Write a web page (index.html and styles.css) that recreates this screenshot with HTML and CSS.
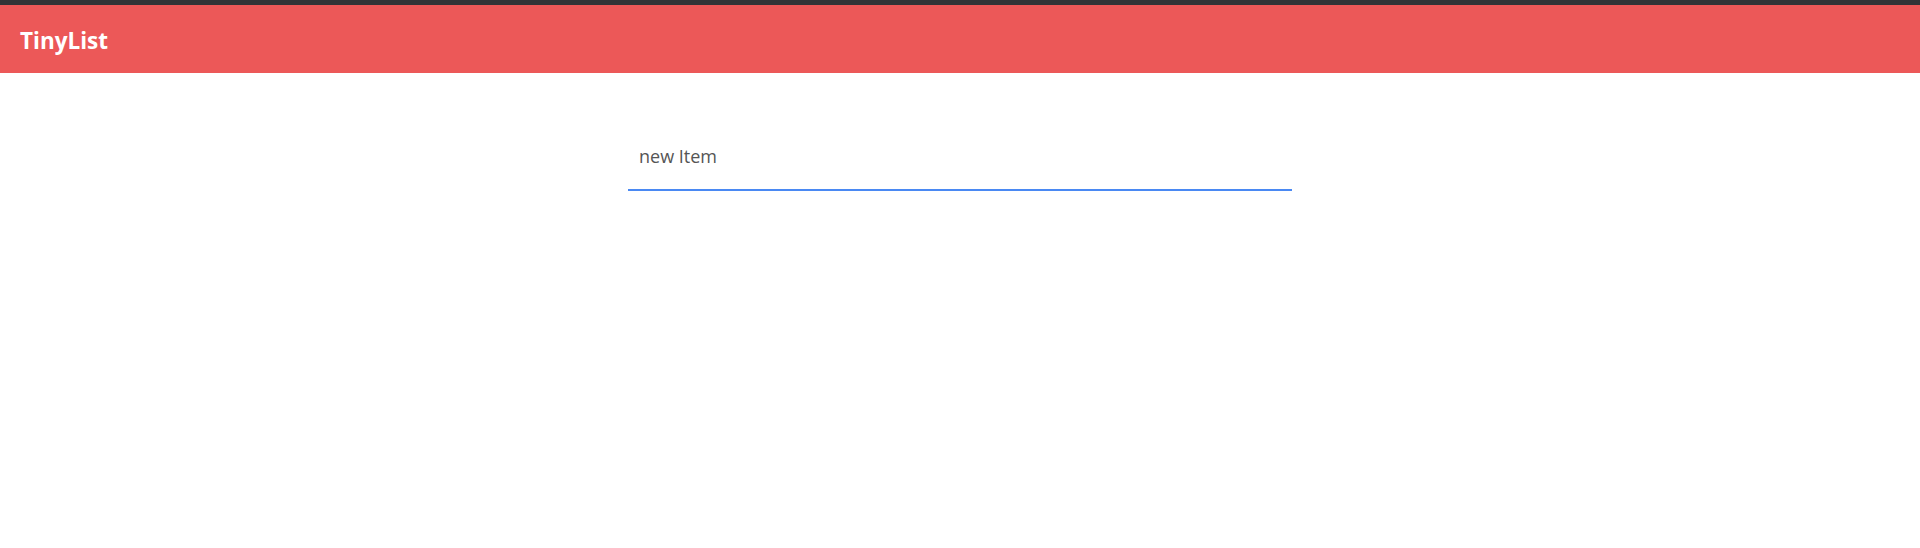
FILE: index.html
```html
<!DOCTYPE html>
<html lang="en">
<head>
<meta charset="utf-8">
<title>TinyList</title>
<link rel="stylesheet" href="styles.css">
</head>
<body>
<div class="topline"></div>
<header class="appbar">
  <h1 class="brand">TinyList</h1>
</header>
<main class="content">
  <div class="field">
    <input class="field-input" type="text" placeholder="new Item">
  </div>
</main>
</body>
</html>
```
FILE: styles.css
```css
html, body {
  margin: 0;
  padding: 0;
  background: #ffffff;
  font-family: "Open Sans", "Noto Sans", sans-serif;
}
.topline {
  height: 5px;
  background: #323437;
}
.appbar {
  height: 68px;
  background: #ec5858;
  display: flex;
  align-items: center;
  padding-left: 20px;
}
.brand {
  margin: 0;
  padding-top: 2px;
  color: #ffffff;
  font-size: 22.5px;
  font-weight: 700;
  letter-spacing: 0;
}
.content {
  display: flex;
  justify-content: center;
  padding-top: 62px;
}
.field {
  width: 664px;
}
.field-input {
  box-sizing: border-box;
  width: 100%;
  height: 56px;
  border: none;
  border-bottom: 2px solid #4a89f3;
  outline: none;
  padding: 0 0 12px 11px;
  font-family: inherit;
  font-size: 18px;
  color: #555555;
  background: transparent;
}
.field-input::placeholder {
  color: #555555;
  opacity: 1;
}
```
